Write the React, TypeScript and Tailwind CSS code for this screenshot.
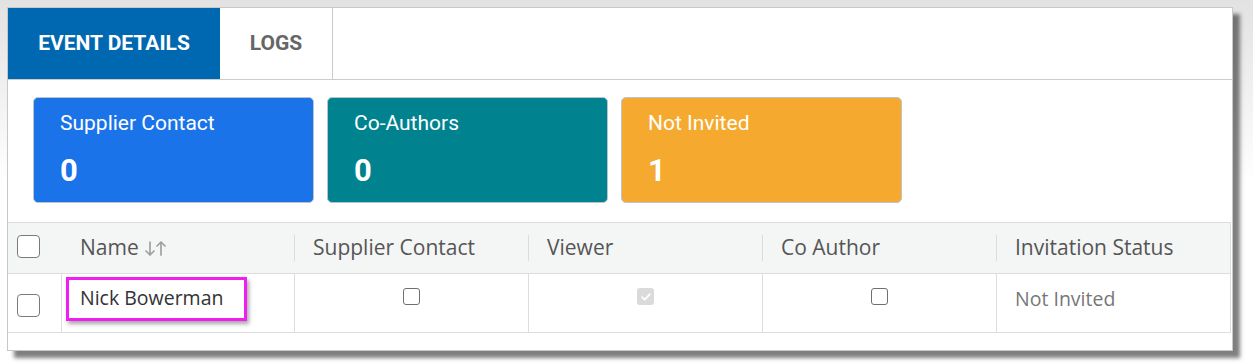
import type { ReactNode } from "react";

const roboto = { fontFamily: "Roboto, 'Liberation Sans', sans-serif" };
const openSans = { fontFamily: "'Open Sans', 'Liberation Sans', sans-serif" };

function StatCard({ title, value, className }: { title: string; value: string; className: string }) {
	return (
		<div className={`flex h-[106px] w-[281px] flex-col rounded-[5px] border border-[#b9c4cf] pl-[26px] pt-[13px] text-white ${className}`}>
			<p className="text-[21px] leading-[25px]">{title}</p>
			<p className="mt-[17px] text-[31px] font-bold leading-[36px]">{value}</p>
		</div>
	);
}

function SmallBox({ checked }: { checked?: boolean }) {
	if (checked) {
		return (
			<span className="flex size-[17px] items-center justify-center rounded-[3px] bg-[#dadada]">
				<svg viewBox="0 0 16 16" className="size-[12px]" fill="none" stroke="white" strokeWidth="2.6" strokeLinecap="round" strokeLinejoin="round">
					<path d="M3 8.5l3.2 3L13 4.5" />
				</svg>
			</span>
		);
	}
	return <span className="block size-[17px] rounded-[3px] border border-[#6f6f6f] bg-white" />;
}

function BigBox() {
	return <span className="block size-[23px] rounded-[4px] border-[1.5px] border-[#7a7a7a] bg-white" />;
}

function SortIcon() {
	return (
		<svg viewBox="0 0 24 17" className="ml-[5px] h-[17px] w-[24px]" fill="none" stroke="#a0a0a0" strokeWidth="1.7" strokeLinecap="round" strokeLinejoin="round">
			<path d="M6 2v13M2 11l4 4 4-4" />
			<path d="M17 15V2M13 6l4-4 4 4" />
		</svg>
	);
}

function HeadCell({ children, divider = true }: { children: ReactNode; divider?: boolean }) {
	return (
		<div className="relative flex items-center pl-[19px] text-[21px] text-[#555]">
			{divider && <span className="absolute left-0 top-[12px] h-[26px] w-px bg-[#dcdcdc]" />}
			{children}
		</div>
	);
}

export default function App() {
	return (
		<div className="h-[364px] w-[1253px] overflow-hidden bg-gradient-to-b from-[#e2e2e2] via-white to-white pl-[7px] pt-[7px]">
			<div className="h-[344px] w-[1226px] border border-[#c8c8c8] bg-white shadow-[7px_7px_4px_rgba(0,0,0,0.5)]">
				<div className="flex h-[72px] border-b border-[#cccccc]" style={roboto}>
					<div className="flex w-[212px] items-center justify-center bg-[#0067b1] text-[21px] font-bold text-white">
						EVENT DETAILS
					</div>
					<div className="flex w-[113px] items-center justify-center border-r border-[#cccccc] text-[21px] font-bold text-[#666]">
						LOGS
					</div>
				</div>

				<div className="mt-[17px] flex gap-[13px] pl-[25px]" style={roboto}>
					<StatCard title="Supplier Contact" value="0" className="bg-[#1a73e8]" />
					<StatCard title="Co-Authors" value="0" className="bg-[#00838f]" />
					<StatCard title="Not Invited" value="1" className="bg-[#f5aa2f]" />
				</div>

				<div className="mt-[19px] w-[1223px] border-r border-[#dddddd]" style={openSans}>
					<div className="grid h-[52px] grid-cols-[53px_233px_234px_234px_234px_235px] border-y border-[#dddddd] bg-[#f4f5f5]">
						<div className="flex items-center pl-[9px] pb-[4px]">
							<BigBox />
						</div>
						<HeadCell divider={false}>
							Name
							<SortIcon />
						</HeadCell>
						<HeadCell>Supplier Contact</HeadCell>
						<HeadCell>Viewer</HeadCell>
						<HeadCell>Co Author</HeadCell>
						<HeadCell>Invitation Status</HeadCell>
					</div>

					<div className="grid h-[59px] grid-cols-[53px_233px_234px_234px_234px_235px] border-b border-[#dddddd]">
						<div className="flex items-center pl-[9px] pt-[4px]">
							<BigBox />
						</div>
						<div className="relative border-l border-[#dddddd] pl-[18px] pt-[9px] text-[19.5px] text-[#333]">
							<span className="absolute left-[4px] top-[3px] h-[44px] w-[181px] border-[3px] border-[#f01ef0] shadow-[2px_3px_4px_rgba(0,0,0,0.35)]" />
							Nick Bowerman
						</div>
						<div className="flex justify-center border-l border-[#dddddd] pt-[14px]">
							<SmallBox />
						</div>
						<div className="flex justify-center border-l border-[#dddddd] pt-[14px]">
							<SmallBox checked />
						</div>
						<div className="flex justify-center border-l border-[#dddddd] pt-[14px]">
							<SmallBox />
						</div>
						<div className="border-l border-[#dddddd] pl-[18px] pt-[10px] text-[19.5px] text-[#777]">
							Not Invited
						</div>
					</div>
				</div>
			</div>
		</div>
	);
}
